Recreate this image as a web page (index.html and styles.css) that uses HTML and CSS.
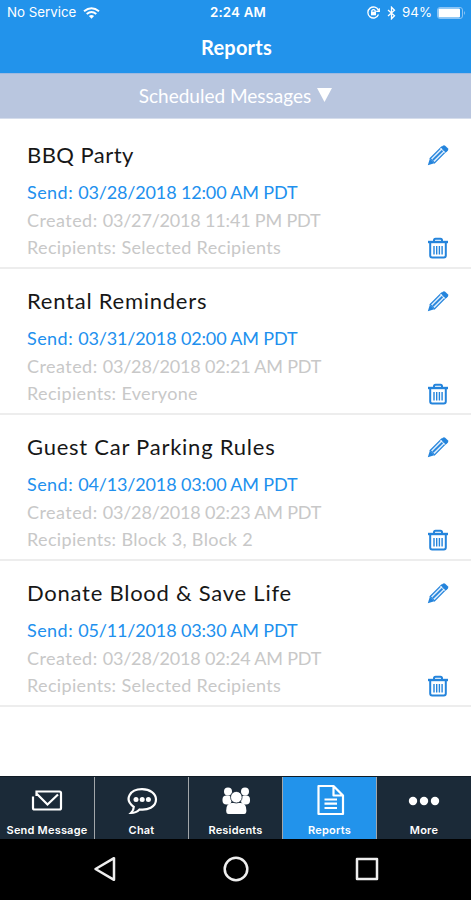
FILE: index.html
```html
<!DOCTYPE html>
<html lang="en">
<head>
<meta charset="utf-8">
<title>Reports</title>
<link rel="stylesheet" href="styles.css">
</head>
<body>
<svg class="defs" aria-hidden="true">
  <symbol id="pencil" viewBox="0 0 22 22">
    <path d="M.8 21.200l2-6.500 4.500 4.500z" fill="currentColor"/>
    <path d="M3.200 14.500L14.500 3.200l4.300 4.300L7.500 18.800z" fill="#d9ebfc" stroke="currentColor" stroke-width="1.200"/>
    <path d="M5.800 16.200L16.200 5.800" stroke="currentColor" stroke-width="1.800"/>
    <path d="M14.200 3.300l1.600-1.600q1.200-1 2.400 0l2.600 2.600q1 1.200 0 2.400l-1.600 1.600z" fill="currentColor"/>
    <path d="M13.300 4.200l4.600 4.600" stroke="#fff" stroke-width=".7"/>
  </symbol>
  <symbol id="trash" viewBox="0 0 20 22">
    <path d="M0 5h20" stroke="currentColor" stroke-width="2.400"/>
    <path d="M6 4.500V3.300q0-1.500 1.500-1.500h5q1.500 0 1.500 1.500v1.200" fill="none" stroke="currentColor" stroke-width="2"/>
    <path d="M2.200 6v12.500q0 2 2 2h11.600q2 0 2-2V6" fill="none" stroke="currentColor" stroke-width="2"/>
    <path d="M6 9v8.500M8.700 9v8.500M11.400 9v8.500M14.100 9v8.500" stroke="currentColor" stroke-width="1.400"/>
  </symbol>
</svg>
<div class="screen">
  <header class="top">
    <div class="status">
      <div class="carrier"><span>No Service</span>
        <svg width="17" height="12" viewBox="0 0 17 12"><path d="M1 4.300q7.500-6.200 15 0M3.700 7q4.800-3.900 9.600 0" fill="none" stroke="#fff" stroke-width="2"/><path d="M5.900 9q2.600-2 5.200 0l-2.600 2.700z" fill="#fff"/></svg>
      </div>
      <div class="clock">2:24 AM</div>
      <div class="indicators">
        <svg width="13" height="13" viewBox="0 0 13 13" fill="none" stroke="#fff"><path d="M11.500 4.500A5.500 5.500 0 1 0 11.500 8.500M12.300 2.300v3H9.200" stroke-width="1.300"/><path d="M4.800 6V4.700q1.700-2 3.400 0V6" stroke-width="1.200"/><path d="M4 5.700h5v3.600H4z" fill="#fff" stroke="none"/></svg>
        <svg width="9" height="14" viewBox="0 0 9 14"><path d="M1 4l6.500 5.800-3 3V1.200l3 3L1 10" fill="none" stroke="#fff" stroke-width="1.300"/></svg>
        <span class="percent">94%</span>
        <svg width="29" height="12" viewBox="0 0 29 12"><rect x=".5" y=".5" width="25" height="11" rx="2.500" fill="none" stroke="#8bc4f5"/><rect x="1.500" y="1.500" width="21.500" height="9" rx="1" fill="#fff"/><path d="M27 4q2 2 0 4z" fill="#8bc4f5"/></svg>
      </div>
    </div>
    <h1>Reports</h1>
  </header>
  <div class="filter"><span>Scheduled Messages</span><svg width="15" height="14" viewBox="0 0 15 14"><path d="M0 0h15L7.500 14z" fill="#fff"/></svg></div>
  <main>
    <article><div class="info"><h2 class="short">BBQ Party</h2><p class="send"><span>Send: </span>03/28/2018 12:00 AM PDT</p><p class="created"><span>Created: </span>03/27/2018 11:41 PM PDT</p><p class="to">Recipients: Selected Recipients</p></div>
      <div class="actions"><svg class="pencil"><use href="#pencil"/></svg><svg class="trash"><use href="#trash"/></svg></div></article>
    <article><div class="info"><h2>Rental Reminders</h2><p class="send"><span>Send: </span>03/31/2018 02:00 AM PDT</p><p class="created"><span>Created: </span>03/28/2018 02:21 AM PDT</p><p class="to">Recipients: Everyone</p></div>
      <div class="actions"><svg class="pencil"><use href="#pencil"/></svg><svg class="trash"><use href="#trash"/></svg></div></article>
    <article><div class="info"><h2>Guest Car Parking Rules</h2><p class="send"><span>Send: </span>04/13/2018 03:00 AM PDT</p><p class="created"><span>Created: </span>03/28/2018 02:23 AM PDT</p><p class="to">Recipients: Block 3, Block 2</p></div>
      <div class="actions"><svg class="pencil"><use href="#pencil"/></svg><svg class="trash"><use href="#trash"/></svg></div></article>
    <article><div class="info"><h2>Donate Blood &amp; Save Life</h2><p class="send"><span>Send: </span>05/11/2018 03:30 AM PDT</p><p class="created"><span>Created: </span>03/28/2018 02:24 AM PDT</p><p class="to">Recipients: Selected Recipients</p></div>
      <div class="actions"><svg class="pencil"><use href="#pencil"/></svg><svg class="trash"><use href="#trash"/></svg></div></article>
  </main>
  <nav class="tabs">
    <div class="tab"><svg width="32" height="34" viewBox="0 0 32 34" fill="none" stroke="#fff" stroke-width="2.200"><path d="M5.500 13V8.500h23q1.500 0 1.500 1.500v15q0 1.500-1.500 1.500h-25Q2 26.500 2 25V13.500M5.500 10.500L16.500 21.500 27 11.500"/></svg><span>Send Message</span></div>
    <div class="tab"><svg width="32" height="34" viewBox="0 0 32 34"><path d="M7.800 23.800C-2.500 16.500 4 6.200 16 6.200c8 0 14 4.500 14 10.400 0 7.500-8.500 11-16.500 9.900-2.500 2.500-5 3.500-8.500 3.500 2-2 2.800-4 2.800-6.200z" fill="none" stroke="#fff" stroke-width="2.200"/><g fill="#fff"><circle cx="10" cy="16.600" r="2.500"/><circle cx="16.200" cy="16.600" r="2.500"/><circle cx="22.400" cy="16.600" r="2.500"/></g></svg><span>Chat</span></div>
    <div class="tab"><svg width="32" height="34" viewBox="0 0 32 34" fill="#fff"><circle cx="8" cy="8.500" r="4"/><circle cx="25" cy="8.500" r="4"/><rect x="2.500" y="12.500" width="9" height="9" rx="4"/><rect x="21" y="12.500" width="9" height="9" rx="4"/><path d="M8.500 31q-2.300 0-2.300-3.500 0-7.500 5.500-7.500h9.200q5.500 0 5.500 7.500 0 3.500-2.300 3.500z"/><circle cx="16.300" cy="14.200" r="5.800" stroke="#1b2a38" stroke-width=".8"/></svg><span>Residents</span></div>
    <div class="tab active"><svg width="32" height="34" viewBox="0 0 32 34" fill="none" stroke="#fff" stroke-width="2.200" stroke-linejoin="round"><path d="M4.500 3h15L29 12.500v18.500H4.500zM19.500 3v9.500H29M10.500 16.500h12.500M10.500 20.700h12.500M10.500 25h12.500"/></svg><span>Reports</span></div>
    <div class="tab"><svg width="32" height="34" viewBox="0 0 32 34" fill="#fff"><circle cx="5" cy="18" r="4.200"/><circle cx="16" cy="18" r="4.200"/><circle cx="27" cy="18" r="4.200"/></svg><span>More</span></div>
  </nav>
  <footer class="system">
    <svg width="24" height="28" viewBox="0 0 24 28"><path d="M21 3.200v21.600L2.500 14z"/></svg>
    <svg width="28" height="28" viewBox="0 0 28 28"><circle cx="14" cy="14" r="11.300"/></svg>
    <svg width="24" height="28" viewBox="0 0 24 28"><path d="M2 4h20v20H2z"/></svg>
  </footer>
</div>
</body>
</html>
```
FILE: styles.css
```css
* { box-sizing: border-box; }
body, h1, h2, p { margin: 0; font-weight: 400; }
body { font-family: Lato, "Open Sans", sans-serif; background: #fff; }
svg { display: block; flex: none; }
.defs { width: 0; height: 0; position: absolute; }
.screen { width: 471px; height: 900px; display: flex; flex-direction: column; overflow: hidden; }
.top { height: 73px; background: #2293eb; color: #fff; }
.status { height: 25px; display: grid; grid-template-columns: 1fr auto 1fr; align-items: center; padding: 0 5px 0 7px; font: 13.3px/25px Inter, sans-serif; }
.carrier, .indicators { display: flex; align-items: center; }
.carrier { gap: 7px; }
.clock { font-weight: 600; padding-left: 3px; letter-spacing: .2px; }
.indicators { justify-content: flex-end; }
.indicators svg:nth-child(2) { margin: 0 6px 0 7px; }
.percent { margin-right: 5px; }
h1 { text-align: center; font-size: 20px; line-height: 44px; font-weight: 700; padding-left: 2px; letter-spacing: .2px; }
.filter { height: 46px; border-top: 1px solid #9fb9df; border-bottom: 1px solid #d5ddec; background: #b9c6df; color: #fff; display: flex; justify-content: center; align-items: center; gap: 6px; font-size: 19px; line-height: 24px; }
.filter svg { margin-bottom: 2px; }
main { flex: 1; padding-top: 4px; }
article { height: 146px; border-bottom: 2px solid #ededed; padding: 18px 22px 0 27px; display: flex; justify-content: space-between; white-space: nowrap; }
h2 { font-size: 22px; line-height: 28px; color: #171717; letter-spacing: .75px; }
h2.short { letter-spacing: .45px; }
p { font-size: 18px; color: #c8c8c8; line-height: 27px; letter-spacing: -.15px; }
p span { letter-spacing: .45px; }
.send { color: #2190ee; margin-top: 10px; }
.created { margin-top: 1px; letter-spacing: -.18px; }
.to { letter-spacing: .34px; }
.actions { display: flex; flex-direction: column; gap: 71px; align-items: center; padding-top: 3px; }
.actions svg { color: #2484dc; }
.pencil { width: 22px; height: 22px; }
.trash { width: 20px; height: 22px; }
.tabs { height: 63px; display: grid; grid-template-columns: 95px 94px 94px 94px 94px; background: #1b2a38; border-top: 1px solid #101b25; }
.tab { display: flex; flex-direction: column; align-items: center; padding-top: 6px; color: #fff; font: 600 11px/15px Inter, sans-serif; letter-spacing: .2px; border-right: 1px solid #a2a6aa; }
.tab span { margin-top: 6px; white-space: nowrap; }
.tab:last-child { border-right: 0; }
.active { background: #2293eb; }
.system { height: 61px; background: #000; display: flex; justify-content: center; align-items: center; gap: 105px; padding-bottom: 1px; }
.system svg { fill: none; stroke: #eee; stroke-width: 2.500; stroke-linejoin: round; }
```
